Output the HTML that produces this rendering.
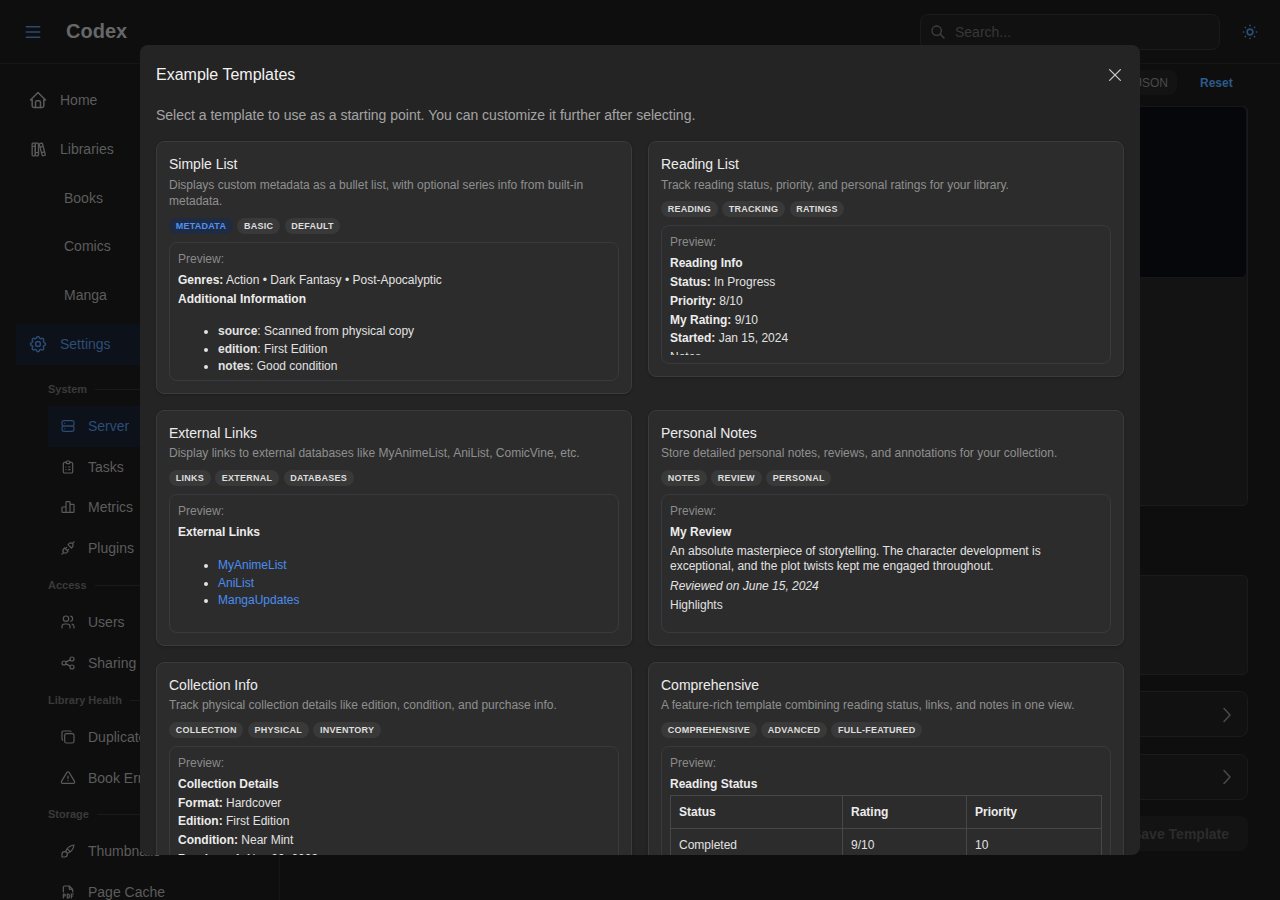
<!DOCTYPE html>
<html><head><meta charset="utf-8">
<style>
*{box-sizing:border-box;margin:0;padding:0}
html,body{width:1280px;height:900px;overflow:hidden;background:#0e0e0e;font-family:"Liberation Sans",sans-serif;}
.abs{position:absolute}
/* background app */
#hdr{position:absolute;left:0;top:0;width:1280px;height:64px;border-bottom:1px solid #161618;background:#0e0e0e}
#sbline{position:absolute;left:279px;top:64px;width:1px;height:836px;background:#161616}
.nav{position:absolute;font-size:14px;color:#5c5c5c;white-space:nowrap;line-height:16px}
.navi{position:absolute}
.sec{position:absolute;font-size:11px;font-weight:700;color:#3a3a3a;line-height:14px;white-space:nowrap}
.secl{position:absolute;height:1px;background:#1a1a1a}
svg.ic{fill:none;stroke:#5a5a5a;stroke-width:1.8;stroke-linecap:round;stroke-linejoin:round}
/* modal */
#modal{position:absolute;left:140px;top:45px;width:1000px;height:810px;background:#242424;border-radius:8px;overflow:hidden}
#mtitle{position:absolute;left:16px;top:20px;font-size:16px;line-height:20px;color:#f2f2f2;white-space:nowrap}
#msub{position:absolute;left:16px;top:60px;font-size:14px;line-height:20px;color:#a4a4a4;white-space:nowrap}
.card{position:absolute;width:476px;background:#2c2c2c;border:1px solid #3a3b41;border-radius:8px;padding:12px;box-shadow:0 1px 3px rgba(0,0,0,.12),0 1px 2px rgba(0,0,0,.1)}
.ct{font-size:14px;line-height:20.3px;color:#ececec;white-space:nowrap}
.cd{position:relative;top:0.5px;margin-top:2px;font-size:12px;line-height:16.5px;color:#8f8f8f}
.badges{margin-top:8.5px;height:16px;display:flex;gap:4.5px}
.bd{height:16px;line-height:14px;padding:0 5.7px;border:1px solid transparent;border-radius:1000px;background:#393939;color:#dedede;font-size:9px;font-weight:700;letter-spacing:.25px;text-transform:uppercase;white-space:nowrap}
.bd.blue{background:#1f2b42;color:#4f92f2}
.pv{margin-top:8px;height:139px;border:1px solid #393a41;border-radius:8px;padding:8px;overflow:hidden;background:#2c2c2c}
.pvin{height:121px;overflow:hidden;font-size:12px;color:#e2e2e2}
.pl{height:16px;line-height:16px;color:#8a8a8a;margin-bottom:4.2px}
.ln{line-height:18.75px;white-space:nowrap}
.ln b{color:#ececec}
ul.bl{margin-top:15px;padding-left:40px;list-style:disc}
ul.bl li{line-height:17.5px;white-space:nowrap}
ul.bl li::marker{color:#e2e2e2}
a{color:#4a8cf2;text-decoration:none}
table.tb{border-collapse:collapse;margin-top:1px;width:432px}
table.tb td,table.tb th{border:1px solid #474747;padding:8px;line-height:16px;text-align:left;font-size:12px}
table.tb th{font-weight:700;color:#ececec}
</style></head>
<body>
<!-- header -->
<div id="hdr">
  <svg class="abs" style="left:25px;top:25px" width="16" height="14" viewBox="0 0 16 14"><path d="M1.3 1.7H14.7M1.3 7H14.7M1.3 12.3H14.7" stroke="#2b4a6e" stroke-width="1.5" fill="none" stroke-linecap="round"/></svg>
  <div class="abs" style="left:66px;top:19px;font-size:20px;font-weight:700;color:#676767;line-height:24px">Codex</div>
  <div class="abs" style="left:920px;top:14px;width:300px;height:36px;border:1px solid #1b1b1b;border-radius:8px;background:#111111"></div>
  <svg class="abs" style="left:930px;top:24px" width="16" height="16" viewBox="0 0 24 24"><circle cx="10" cy="10" r="7" stroke="#404040" stroke-width="2" fill="none"/><path d="M15 15l6 6" stroke="#404040" stroke-width="2" fill="none" stroke-linecap="round"/></svg>
  <div class="abs" style="left:955px;top:24px;font-size:14px;line-height:16px;color:#383838">Search...</div>
  <svg class="abs" style="left:1241px;top:23px" width="18" height="18" viewBox="0 0 24 24" fill="none" stroke="#2a4f7b" stroke-width="2.2" stroke-linecap="round"><circle cx="12" cy="12" r="3.8"/><path d="M12 3.2v.3M12 20.5v.3M3.2 12h.3M20.5 12h.3M5.9 5.9l.1.1M18 18l.1.1M5.9 18.1l.1-.1M18 6l.1-.1"/></svg>
</div>
<div id="sbline"></div>

<!-- sidebar -->
<div class="abs" style="left:16px;top:324px;width:248px;height:41px;background:#0d1119"></div>
<div class="abs" style="left:48px;top:406px;width:216px;height:41px;background:#0d1119"></div>

<svg class="ic abs" style="left:28px;top:90px" width="20" height="20" viewBox="0 0 24 24"><path d="M5 12H3l9-9 9 9h-2"/><path d="M5 12v7a2 2 0 0 0 2 2h10a2 2 0 0 0 2-2v-7"/><path d="M9 21v-6a2 2 0 0 1 2-2h2a2 2 0 0 1 2 2v6"/></svg>
<div class="nav" style="left:60px;top:92px">Home</div>
<svg class="ic abs" style="left:28.5px;top:139.5px;stroke-width:1.7" width="19" height="19" viewBox="0 0 24 24"><path d="M5 4h2a1 1 0 0 1 1 1v14a1 1 0 0 1-1 1H5a1 1 0 0 1-1-1V5a1 1 0 0 1 1-1z"/><path d="M9 4h2a1 1 0 0 1 1 1v14a1 1 0 0 1-1 1H9a1 1 0 0 1-1-1V5a1 1 0 0 1 1-1z"/><path d="M5 8h3M9 16h3M13.8 4.6l2-.5a1 1 0 0 1 1.2.7l3.5 13.3a1 1 0 0 1-.7 1.2l-2 .5a1 1 0 0 1-1.2-.7L13 5.8a1 1 0 0 1 .8-1.2zM14 9l4-1M16 16l3.9-1"/></svg>
<div class="nav" style="left:60px;top:141px">Libraries</div>
<div class="nav" style="left:64px;top:190px">Books</div>
<div class="nav" style="left:64px;top:238px">Comics</div>
<div class="nav" style="left:64px;top:287px">Manga</div>
<svg class="ic abs" style="left:28px;top:334px;stroke:#2a4b74" width="20" height="20" viewBox="0 0 24 24"><path d="M10.3 4.3c.4-1.8 3-1.8 3.4 0a1.7 1.7 0 0 0 2.6 1.1c1.5-.9 3.3.8 2.4 2.4a1.7 1.7 0 0 0 1 2.6c1.8.4 1.8 3 0 3.4a1.7 1.7 0 0 0-1 2.6c.9 1.5-.8 3.3-2.4 2.4a1.7 1.7 0 0 0-2.6 1c-.4 1.8-3 1.8-3.4 0a1.7 1.7 0 0 0-2.6-1c-1.5.9-3.3-.8-2.4-2.4a1.7 1.7 0 0 0-1-2.6c-1.8-.4-1.8-3 0-3.4a1.7 1.7 0 0 0 1-2.6c-.9-1.5.8-3.3 2.4-2.4 1 .6 2.3.1 2.6-1.1z"/><circle cx="12" cy="12" r="3"/></svg>
<div class="nav" style="left:60px;top:336px;color:#2c4d77">Settings</div>

<div class="sec" style="left:48px;top:382px">System</div><div class="secl" style="left:95px;top:389px;width:185px"></div>
<svg class="ic abs" style="left:60px;top:418px;stroke:#2a4b74" width="16" height="16" viewBox="0 0 24 24"><path d="M3 7a3 3 0 0 1 3-3h12a3 3 0 0 1 3 3v2a3 3 0 0 1-3 3H6a3 3 0 0 1-3-3z"/><path d="M3 15a3 3 0 0 1 3-3h12a3 3 0 0 1 3 3v2a3 3 0 0 1-3 3H6a3 3 0 0 1-3-3zM7 8v.01M7 16v.01"/></svg>
<div class="nav" style="left:88px;top:418px;color:#2c4d77">Server</div>
<svg class="ic abs" style="left:60px;top:459px" width="16" height="16" viewBox="0 0 24 24"><path d="M9 5H7a2 2 0 0 0-2 2v12a2 2 0 0 0 2 2h10a2 2 0 0 0 2-2V7a2 2 0 0 0-2-2h-2"/><path d="M9 5a2 2 0 0 1 2-2h2a2 2 0 0 1 2 2v0a2 2 0 0 1-2 2h-2a2 2 0 0 1-2-2zM9 12h.01M13 12h2M9 16h.01M13 16h2"/></svg>
<div class="nav" style="left:88px;top:459px">Tasks</div>
<svg class="ic abs" style="left:60px;top:499px" width="16" height="16" viewBox="0 0 24 24"><path d="M3 13a1 1 0 0 1 1-1h4a1 1 0 0 1 1 1v6a1 1 0 0 1-1 1H4a1 1 0 0 1-1-1zM15 9a1 1 0 0 1 1-1h4a1 1 0 0 1 1 1v10a1 1 0 0 1-1 1h-4a1 1 0 0 1-1-1zM9 5a1 1 0 0 1 1-1h4a1 1 0 0 1 1 1v14a1 1 0 0 1-1 1h-4a1 1 0 0 1-1-1zM4 20h14"/></svg>
<div class="nav" style="left:88px;top:499px">Metrics</div>
<svg class="ic abs" style="left:60px;top:540px" width="16" height="16" viewBox="0 0 24 24"><path d="M7 12l5 5-1.5 1.5a3.5 3.5 0 1 1-5-5L7 12zM17 12l-5-5 1.5-1.5a3.5 3.5 0 1 1 5 5L17 12zM3 21l2.5-2.5M18.5 5.5L21 3M10 11l-2 2M13 14l-2 2"/></svg>
<div class="nav" style="left:88px;top:540px">Plugins</div>

<div class="sec" style="left:48px;top:578px">Access</div><div class="secl" style="left:95px;top:585px;width:185px"></div>
<svg class="ic abs" style="left:60px;top:614px" width="16" height="16" viewBox="0 0 24 24"><path d="M5 7a4 4 0 1 0 8 0 4 4 0 1 0-8 0M3 21v-2a4 4 0 0 1 4-4h4a4 4 0 0 1 4 4v2M16 3.13a4 4 0 0 1 0 7.75M21 21v-2a4 4 0 0 0-3-3.85"/></svg>
<div class="nav" style="left:88px;top:614px">Users</div>
<svg class="ic abs" style="left:60px;top:655px" width="16" height="16" viewBox="0 0 24 24"><path d="M3 12a3 3 0 1 0 6 0 3 3 0 1 0-6 0M15 6a3 3 0 1 0 6 0 3 3 0 1 0-6 0M15 18a3 3 0 1 0 6 0 3 3 0 1 0-6 0M8.7 10.7l6.6-3.4M8.7 13.3l6.6 3.4"/></svg>
<div class="nav" style="left:88px;top:655px">Sharing</div>

<div class="sec" style="left:48px;top:693px">Library Health</div><div class="secl" style="left:130px;top:700px;width:150px"></div>
<svg class="ic abs" style="left:60px;top:729px" width="16" height="16" viewBox="0 0 24 24"><path d="M7 9.67A2.67 2.67 0 0 1 9.67 7h8.66A2.67 2.67 0 0 1 21 9.67v8.66A2.67 2.67 0 0 1 18.33 21H9.67A2.67 2.67 0 0 1 7 18.33z"/><path d="M4.01 16.74A2 2 0 0 1 3 15V5c0-1.1.9-2 2-2h10c.75 0 1.16.38 1.5 1"/></svg>
<div class="nav" style="left:88px;top:729px">Duplicates</div>
<svg class="ic abs" style="left:60px;top:770px" width="16" height="16" viewBox="0 0 24 24"><path d="M12 9v4M10.36 3.59L2.25 17.13a1.9 1.9 0 0 0 1.62 2.87h16.26a1.9 1.9 0 0 0 1.62-2.87L13.64 3.59a1.9 1.9 0 0 0-3.28 0zM12 16h.01"/></svg>
<div class="nav" style="left:88px;top:770px">Book Errors</div>

<div class="sec" style="left:48px;top:807px">Storage</div><div class="secl" style="left:97px;top:814px;width:183px"></div>
<svg class="ic abs" style="left:60px;top:843px" width="16" height="16" viewBox="0 0 24 24"><path d="M3 21v-4a4 4 0 1 1 4 4H3M21 3a16 16 0 0 0-12.8 10.2M21 3a16 16 0 0 1-10.2 12.8M10.6 9a9 9 0 0 1 4.4 4.4"/></svg>
<div class="nav" style="left:88px;top:843px">Thumbnails</div>
<svg class="ic abs" style="left:60px;top:884px" width="16" height="16" viewBox="0 0 24 24"><path d="M14 3v4a1 1 0 0 0 1 1h4M5 12V5a2 2 0 0 1 2-2h7l5 5v4M5 18h1.5a1.5 1.5 0 0 0 0-3H5v6M17 18h2M20 15h-3v6M11 15v6h1a2 2 0 0 0 2-2v-2a2 2 0 0 0-2-2h-1z"/></svg>
<div class="nav" style="left:88px;top:884px">Page Cache</div>

<!-- right background panel -->
<div class="abs" style="left:1080px;top:70px;width:97px;height:25px;border-radius:8px;background:#131313"></div>
<div class="abs" style="left:1136px;top:76px;font-size:12px;line-height:14px;color:#4a4a4a">JSON</div>
<div class="abs" style="left:1200px;top:76px;font-size:12px;font-weight:700;line-height:14px;color:#2d5a8c">Reset</div>
<div class="abs" style="left:1000px;top:106px;width:248px;height:400px;border:1px solid #1b1b1b;border-radius:5px;background:#131313"></div><div class="abs" style="left:1000px;top:106px;width:247px;height:172px;border:1px solid #161616;border-radius:6px;background:#06070a"></div>
<div class="abs" style="left:1000px;top:575px;width:248px;height:100px;border:1px solid #1b1b1b;border-radius:5px;background:#131313"></div>
<div class="abs" style="left:1000px;top:691px;width:248px;height:46px;border:1px solid #1b1b1b;border-radius:8px;background:#111111"></div>
<svg class="abs" style="left:1222px;top:707px" width="10" height="16" viewBox="0 0 10 16" fill="none" stroke="#4a4a4a" stroke-width="1.5" stroke-linecap="round" stroke-linejoin="round"><path d="M2 1.5l6 6.5-6 6.5"/></svg>
<div class="abs" style="left:1000px;top:754px;width:248px;height:46px;border:1px solid #1b1b1b;border-radius:8px;background:#111111"></div>
<svg class="abs" style="left:1222px;top:769px" width="10" height="16" viewBox="0 0 10 16" fill="none" stroke="#4a4a4a" stroke-width="1.5" stroke-linecap="round" stroke-linejoin="round"><path d="M2 1.5l6 6.5-6 6.5"/></svg>
<div class="abs" style="left:1000px;top:816px;width:248px;height:35px;border-radius:8px;background:#131313"></div>
<div class="abs" style="left:1132px;top:826px;font-size:14px;font-weight:700;line-height:16px;color:#2c2c2c">Save Template</div>

<!-- modal -->
<div id="modal">
  <div id="mtitle">Example Templates</div>
  <svg class="abs" style="left:968px;top:23px" width="14" height="14" viewBox="0 0 14 14"><path d="M1.6 1.6L12.4 12.4M12.4 1.6L1.6 12.4" stroke="#c6c6c6" stroke-width="1.3" fill="none" stroke-linecap="round"/></svg>
  <div id="msub">Select a template to use as a starting point. You can customize it further after selecting.</div>

  <!-- card 1 -->
  <div class="card" style="left:16px;top:96px">
    <div class="ct">Simple List</div>
    <div class="cd">Displays custom metadata as a bullet list, with optional series info from built-in metadata.</div>
    <div class="badges"><span class="bd blue">metadata</span><span class="bd">basic</span><span class="bd">default</span></div>
    <div class="pv"><div class="pvin">
      <div class="pl">Preview:</div>
      <div class="ln"><b>Genres:</b> Action • Dark Fantasy • Post-Apocalyptic</div>
      <div class="ln"><b>Additional Information</b></div>
      <ul class="bl"><li><b>source</b>: Scanned from physical copy</li><li><b>edition</b>: First Edition</li><li><b>notes</b>: Good condition</li></ul>
    </div></div>
  </div>

  <!-- card 2 -->
  <div class="card" style="left:508px;top:96px">
    <div class="ct">Reading List</div>
    <div class="cd">Track reading status, priority, and personal ratings for your library.</div>
    <div class="badges"><span class="bd">reading</span><span class="bd">tracking</span><span class="bd">ratings</span></div>
    <div class="pv"><div class="pvin">
      <div class="pl">Preview:</div>
      <div class="ln"><b>Reading Info</b></div>
      <div class="ln"><b>Status:</b> In Progress</div>
      <div class="ln"><b>Priority:</b> 8/10</div>
      <div class="ln"><b>My Rating:</b> 9/10</div>
      <div class="ln"><b>Started:</b> Jan 15, 2024</div>
      <div class="ln">Notes</div>
    </div></div>
  </div>

  <!-- card 3 -->
  <div class="card" style="left:16px;top:365px">
    <div class="ct">External Links</div>
    <div class="cd" style="top:-0.4px">Display links to external databases like MyAnimeList, AniList, ComicVine, etc.</div>
    <div class="badges"><span class="bd">links</span><span class="bd">external</span><span class="bd">databases</span></div>
    <div class="pv"><div class="pvin">
      <div class="pl">Preview:</div>
      <div class="ln"><b>External Links</b></div>
      <ul class="bl"><li><a>MyAnimeList</a></li><li><a>AniList</a></li><li><a>MangaUpdates</a></li></ul>
    </div></div>
  </div>

  <!-- card 4 -->
  <div class="card" style="left:508px;top:365px">
    <div class="ct">Personal Notes</div>
    <div class="cd" style="top:-0.4px">Store detailed personal notes, reviews, and annotations for your collection.</div>
    <div class="badges"><span class="bd">notes</span><span class="bd">review</span><span class="bd">personal</span></div>
    <div class="pv"><div class="pvin">
      <div class="pl">Preview:</div>
      <div class="ln"><b>My Review</b></div>
      <div style="line-height:15.6px;margin-top:1.45px;white-space:normal">An absolute masterpiece of storytelling. The character development is<br>exceptional, and the plot twists kept me engaged throughout.</div>
      <div class="ln" style="margin-top:2.2px"><i>Reviewed on June 15, 2024</i></div>
      <div class="ln" style="margin-top:0.6px">Highlights</div>
    </div></div>
  </div>

  <!-- card 5 -->
  <div class="card" style="left:16px;top:617px">
    <div class="ct">Collection Info</div>
    <div class="cd" style="top:-0.4px">Track physical collection details like edition, condition, and purchase info.</div>
    <div class="badges"><span class="bd">collection</span><span class="bd">physical</span><span class="bd">inventory</span></div>
    <div class="pv"><div class="pvin" style="margin-top:-0.5px">
      <div class="pl">Preview:</div>
      <div class="ln"><b>Collection Details</b></div>
      <div class="ln"><b>Format:</b> Hardcover</div>
      <div class="ln"><b>Edition:</b> First Edition</div>
      <div class="ln"><b>Condition:</b> Near Mint</div>
      <div class="ln"><b>Purchased:</b> Nov 20, 2023</div>
    </div></div>
  </div>

  <!-- card 6 -->
  <div class="card" style="left:508px;top:617px">
    <div class="ct">Comprehensive</div>
    <div class="cd" style="top:-0.4px">A feature-rich template combining reading status, links, and notes in one view.</div>
    <div class="badges"><span class="bd">comprehensive</span><span class="bd">advanced</span><span class="bd">full-featured</span></div>
    <div class="pv" style="height:auto"><div class="pvin" style="height:auto;margin-top:-0.5px">
      <div class="pl">Preview:</div>
      <div class="ln"><b>Reading Status</b></div>
      <table class="tb"><tr><th style="width:172px">Status</th><th style="width:124px">Rating</th><th>Priority</th></tr>
      <tr><td>Completed</td><td>9/10</td><td>10</td></tr></table>
    </div></div>
  </div>
</div>
</body></html>
